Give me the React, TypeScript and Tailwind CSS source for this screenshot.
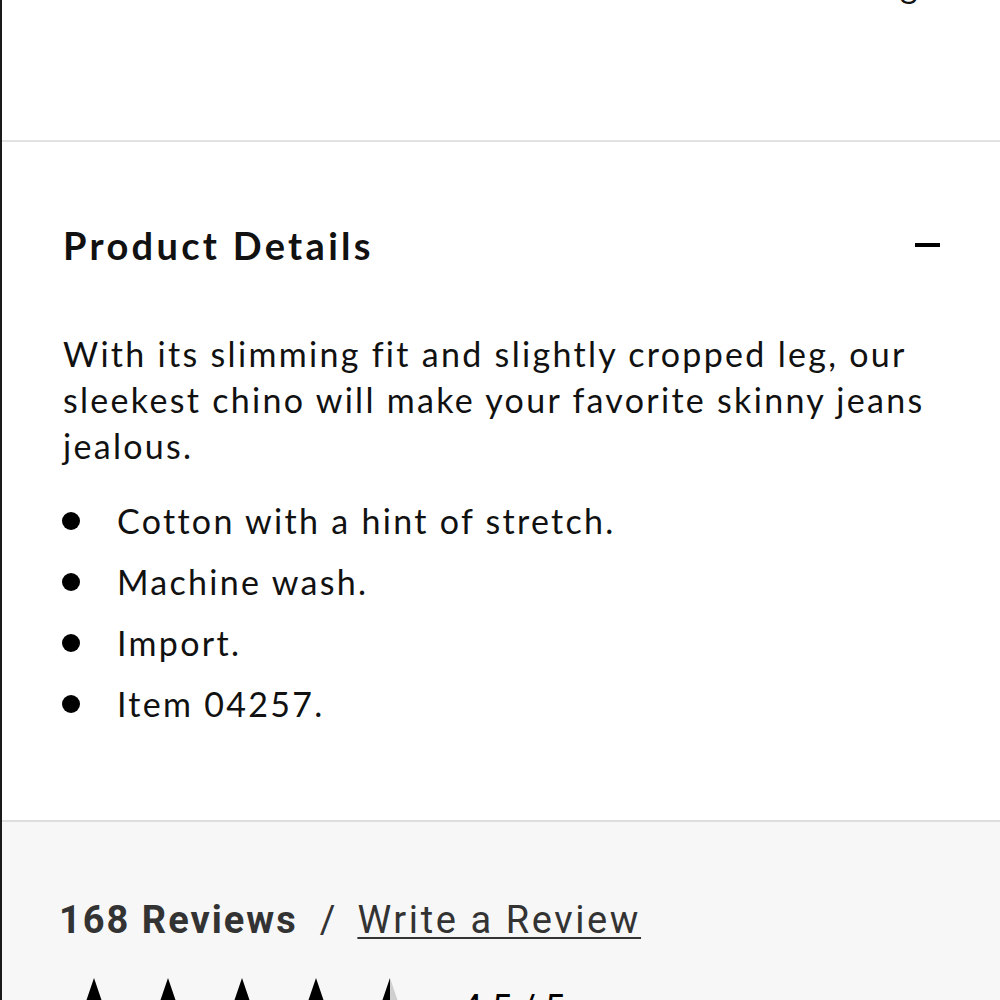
import React from "react"

const bullets = ["Cotton with a hint of stretch.", "Machine wash.", "Import.", "Item 04257."]

const STAR = "M32 2 L39.6 24.3 L63 24.6 L44.3 38.8 L51.1 61.3 L32 47.8 L12.9 61.3 L19.7 38.8 L1 24.6 L24.4 24.3 Z"

function Star({ half = false }: { half?: boolean }) {
  return (
    <svg width="64" height="64" viewBox="0 0 64 64" className="shrink-0">
      {half ? (
        <>
          <defs>
            <clipPath id="leftHalf">
              <rect x="0" y="0" width="32" height="64" />
            </clipPath>
          </defs>
          <path d={STAR} fill="#cfcfcf" />
          <path d={STAR} fill="#000" clipPath="url(#leftHalf)" />
        </>
      ) : (
        <path d={STAR} fill="#000" />
      )}
    </svg>
  )
}

export default function App() {
  return (
    <div
      className="w-[1000px] h-[1000px] overflow-hidden bg-white border-l-[2px] border-[#1a1a1a] text-[#111]"
      style={{ fontFamily: "Lato, 'Open Sans', sans-serif" }}
    >
      {/* previous section, cut off at top */}
      <div className="h-[140px] flex justify-end pr-[80px]">
        <div className="mt-[-38px] text-[34px] leading-[46px] tracking-[2.4px]">Sizing</div>
      </div>

      <section className="border-t-[2px] border-[#e2e2e2] px-[61px] pt-[80px] pb-[93px]">
        <div className="flex items-center justify-between">
          <h2 className="text-[38px] leading-[46px] font-bold tracking-[3.3px]">Product Details</h2>
          <span className="block w-[25px] h-[4px] bg-black mr-[-1px]" />
        </div>

        <p className="mt-[63px] text-[34px] leading-[46px] tracking-[2.3px]">
          With its slimming fit and slightly cropped leg, our sleekest chino will make your favorite skinny jeans
          jealous.
        </p>

        <ul className="mt-[29px] space-y-[15px]">
          {bullets.map((b) => (
            <li key={b} className="flex items-center text-[34px] leading-[46px] tracking-[2.3px]">
              <span className="w-[18px] h-[18px] rounded-full bg-black shrink-0 ml-[-1px] mr-[37px]" />
              <span>{b}</span>
            </li>
          ))}
        </ul>
      </section>

      <section
        className="border-t-[2px] border-[#dedede] bg-[#f7f7f7] px-[57px] pt-[75px] h-[300px] text-[#333]"
        style={{ fontFamily: "Roboto, 'Liberation Sans', sans-serif" }}
      >
        <div className="flex items-baseline text-[38px] leading-[46px] tracking-[2px]">
          <span className="font-bold">168 Reviews</span>
          <span className="ml-[22px] mr-[20px]">/</span>
          <a className="underline underline-offset-[4px] decoration-[2px] tracking-[2.6px]">Write a Review</a>
        </div>
        <div className="mt-[33px] flex items-center gap-[10px] pl-[3px]">
          <Star />
          <Star />
          <Star />
          <Star />
          <Star half />
          <span className="ml-[30px] text-[36px] text-black">4.5 / 5</span>
        </div>
      </section>
    </div>
  )
}
